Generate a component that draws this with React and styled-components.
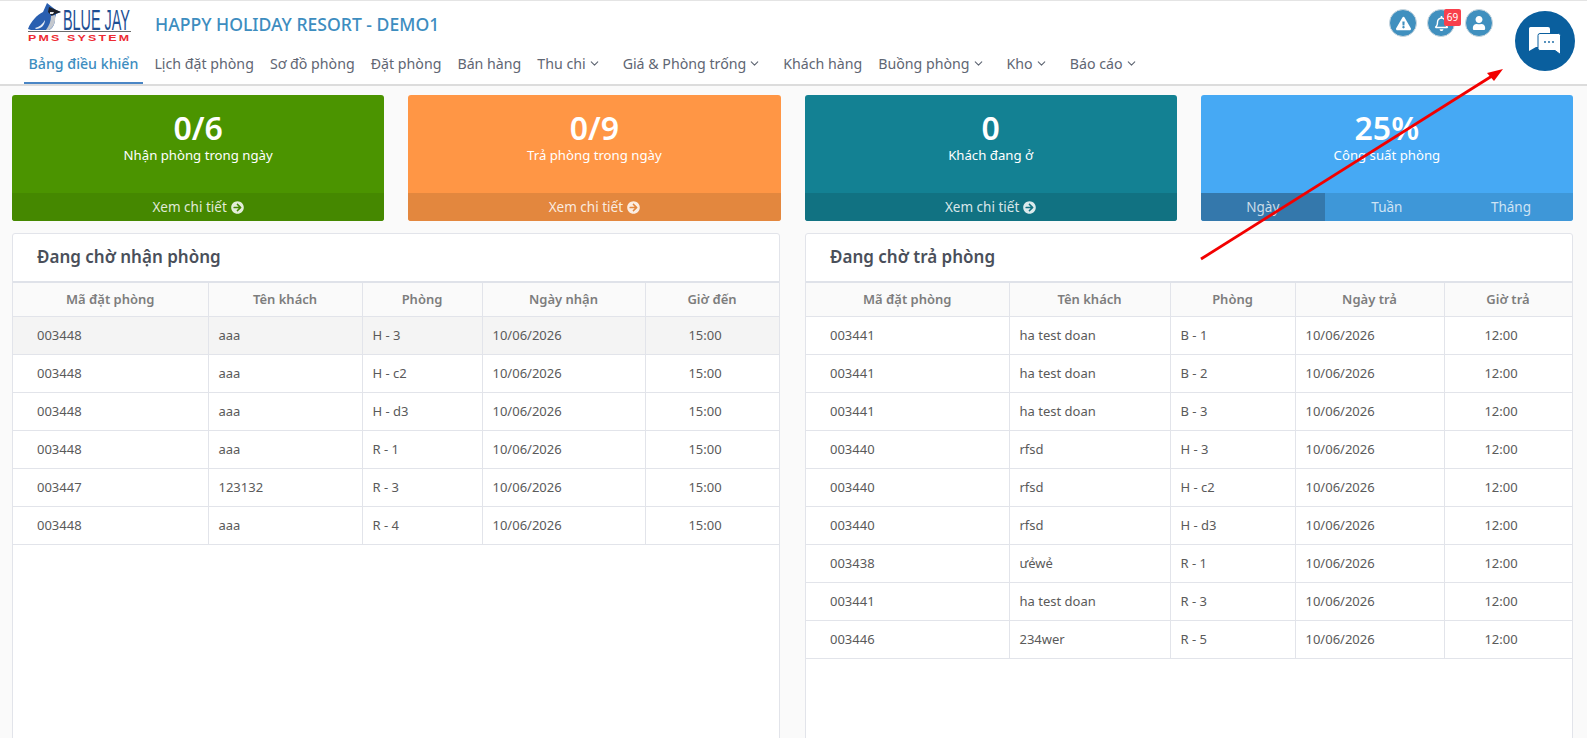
import React from 'react';
import styled, { createGlobalStyle } from 'styled-components';
import { FaExclamationTriangle, FaRegBell, FaUser, FaArrowCircleRight } from 'react-icons/fa';
import { FiChevronDown } from 'react-icons/fi';

const NAV = [
  { label: 'Bảng điều khiển', active: true },
  { label: 'Lịch đặt phòng' },
  { label: 'Sơ đồ phòng' },
  { label: 'Đặt phòng' },
  { label: 'Bán hàng' },
  { label: 'Thu chi', drop: true },
  { label: 'Giá & Phòng trống', drop: true },
  { label: 'Khách hàng' },
  { label: 'Buồng phòng', drop: true },
  { label: 'Kho', drop: true },
  { label: 'Báo cáo', drop: true },
];

const CHECK_IN = [
  ['003448', 'aaa', 'H - 3', '10/06/2026', '15:00'],
  ['003448', 'aaa', 'H - c2', '10/06/2026', '15:00'],
  ['003448', 'aaa', 'H - d3', '10/06/2026', '15:00'],
  ['003448', 'aaa', 'R - 1', '10/06/2026', '15:00'],
  ['003447', '123132', 'R - 3', '10/06/2026', '15:00'],
  ['003448', 'aaa', 'R - 4', '10/06/2026', '15:00'],
];

const CHECK_OUT = [
  ['003441', 'ha test doan', 'B - 1', '10/06/2026', '12:00'],
  ['003441', 'ha test doan', 'B - 2', '10/06/2026', '12:00'],
  ['003441', 'ha test doan', 'B - 3', '10/06/2026', '12:00'],
  ['003440', 'rfsd', 'H - 3', '10/06/2026', '12:00'],
  ['003440', 'rfsd', 'H - c2', '10/06/2026', '12:00'],
  ['003440', 'rfsd', 'H - d3', '10/06/2026', '12:00'],
  ['003438', 'ưẻwẻ', 'R - 1', '10/06/2026', '12:00'],
  ['003441', 'ha test doan', 'R - 3', '10/06/2026', '12:00'],
  ['003446', '234wer', 'R - 5', '10/06/2026', '12:00'],
];

function BirdLogo() {
  return (
    <LogoBird viewBox="0 0 33 28">
      <path d="M0 26 C3 18 9 12 15 9 L19 0 L24 4 L28 7 L33 9 L28 11 L27 15 C27 21 25 25 21 27 L3 27 Z" fill="#2a5fb0" />
      <path d="M7 25 C11 24 15 21 17 17 C17 22 13 26 8 26 Z" fill="#e6ecf5" />
      <path d="M21 4 L26 6 L33 9 L27 11 L24 13 L20 9 Z" fill="#1d2028" />
      <path d="M22 9 L26 9 L25 11 L22 11 Z" fill="#e8e8e8" />
      <path d="M23 13 L27 12 C28 18 26 24 21 27 L18 27 C21 23 23 18 23 13 Z" fill="#c4c8ce" />
    </LogoBird>
  );
}

function ChatIcon() {
  return (
    <svg width="32" height="28" viewBox="0 0 32 28">
      <path d="M1.5 0 H19 Q21 0 21 2 V18 Q21 20 19 20 H7 L0 24 V1.5 Q0 0 1.5 0 Z" fill="#fff" />
      <path d="M11 6.5 H29.5 Q31.5 6.5 31.5 8.5 V27.5 L26 23.5 H11 Q9 23.5 9 21.5 V8.5 Q9 6.5 11 6.5 Z" fill="#fff" stroke="#0a5f9e" />
      <circle cx="16" cy="15" r="0.9" fill="#0a5f9e" />
      <circle cx="20" cy="15" r="0.9" fill="#0a5f9e" />
      <circle cx="24" cy="15" r="0.9" fill="#0a5f9e" />
    </svg>
  );
}

function StatCard({ value, label, bg, foot, tabs }) {
  return (
    <Card $bg={bg}>
      <CardBody>
        <CardValue>{value}</CardValue>
        <CardLabel>{label}</CardLabel>
      </CardBody>
      {tabs ? (
        <CardTabs>
          {tabs.map((t, i) => (
            <CardTab key={t} $active={i === 0}>{t}</CardTab>
          ))}
        </CardTabs>
      ) : (
        <CardFoot $bg={foot}>
          Xem chi tiết <FaArrowCircleRight size={13} />
        </CardFoot>
      )}
    </Card>
  );
}

function BookingTable({ title, head, rows, widths, highlight }) {
  return (
    <Panel>
      <PanelTitle>{title}</PanelTitle>
      <Table>
        <colgroup>
          {widths.map((w, i) => (
            <col key={i} width={w} />
          ))}
        </colgroup>
        <thead>
          <tr>
            {head.map((h) => (
              <Th key={h}>{h}</Th>
            ))}
          </tr>
        </thead>
        <tbody>
          {rows.map((r, i) => (
            <Row key={i} $hl={highlight && i === 0}>
              {r.map((c, j) => (
                <Td key={j} $time={j === 4}>{c}</Td>
              ))}
            </Row>
          ))}
        </tbody>
      </Table>
    </Panel>
  );
}

export default function App() {
  return (
    <Page>
      <GlobalStyle />
      <Header>
        <TopRow>
          <Logo>
            <LogoMark>
              <BirdLogo />
              <LogoName>BLUE JAY</LogoName>
            </LogoMark>
            <LogoSub>PMS SYSTEM</LogoSub>
          </Logo>
          <HotelName>HAPPY HOLIDAY RESORT - DEMO1</HotelName>
          <TopIcons>
            <RoundIcon><FaExclamationTriangle size={15} /></RoundIcon>
            <RoundIcon>
              <FaRegBell size={15} />
              <Badge>69</Badge>
            </RoundIcon>
            <RoundIcon><FaUser size={14} /></RoundIcon>
          </TopIcons>
        </TopRow>
        <Nav>
          {NAV.map((n) => (
            <NavItem key={n.label} $active={n.active} $drop={n.drop}>
              {n.label}
              {n.drop && <FiChevronDown size={13} />}
            </NavItem>
          ))}
        </Nav>
      </Header>

      <Content>
        <Cards>
          <StatCard value="0/6" label="Nhận phòng trong ngày" bg="#4b9400" foot="#458800" />
          <StatCard value="0/9" label="Trả phòng trong ngày" bg="#ff9645" foot="#e3873e" />
          <StatCard value="0" label="Khách đang ở" bg="#138193" foot="#117282" />
          <StatCard value="25%" label="Công suất phòng" bg="#46a9f4" tabs={['Ngày', 'Tuần', 'Tháng']} />
        </Cards>
        <Panels>
          <BookingTable
            title="Đang chờ nhận phòng"
            head={['Mã đặt phòng', 'Tên khách', 'Phòng', 'Ngày nhận', 'Giờ đến']}
            rows={CHECK_IN}
            widths={[195, 154, 120, 163, 134]}
            highlight
          />
          <BookingTable
            title="Đang chờ trả phòng"
            head={['Mã đặt phòng', 'Tên khách', 'Phòng', 'Ngày trả', 'Giờ trả']}
            rows={CHECK_OUT}
            widths={[203, 161, 125, 149, 128]}
          />
        </Panels>
      </Content>

      <ChatButton><ChatIcon /></ChatButton>
      <ArrowOverlay viewBox="0 0 1587 738">
        <line x1="1201" y1="259" x2="1492" y2="76" stroke="#f20000" strokeWidth="2.8" />
        <polygon points="1503,69 1487,73 1494,81" fill="#f20000" />
      </ArrowOverlay>
    </Page>
  );
}

const GlobalStyle = createGlobalStyle`
  html, body {
    margin: 0;
    padding: 0;
    overflow: hidden;
    background: #fafafa;
    font-family: "Noto Sans", "Open Sans", sans-serif;
  }
  * { box-sizing: border-box; }
`;

const Page = styled.div`
  position: relative;
  height: 738px;
  overflow: hidden;
  color: #555;
`;

const Header = styled.header`
  height: 86px;
  background: #fff;
  border-top: 1px solid #e4e4e4;
  border-bottom: 2px solid #dcdcdc;
`;

const TopRow = styled.div`
  display: flex;
  align-items: flex-start;
  height: 44px;
  padding: 3px 94px 0 28px;
`;

const Logo = styled.div`
  width: 127px;
  display: flex;
  flex-direction: column;
`;

const LogoMark = styled.div`
  display: flex;
  align-items: flex-end;
  height: 28px;
  width: 103px;
  border-bottom: 1px solid #6a6a6a;
`;

const LogoBird = styled.svg`
  width: 33px;
  height: 28px;
  flex: none;
`;

const LogoName = styled.span`
  font-family: "Liberation Sans", sans-serif;
  font-size: 30px;
  line-height: 26px;
  color: #1d4f94;
  white-space: nowrap;
  margin-left: 2px;
  margin-bottom: -2px;
  transform: scaleX(0.48);
  transform-origin: left bottom;
`;

const LogoSub = styled.span`
  font-family: "Liberation Sans", sans-serif;
  font-size: 8.5px;
  line-height: 9px;
  margin-top: 2px;
  letter-spacing: 1.5px;
  font-weight: 700;
  color: #ee2b33;
  white-space: nowrap;
  transform: scaleX(1.46);
  transform-origin: left center;
`;

const HotelName = styled.div`
  font-size: 17.6px;
  line-height: 24px;
  margin-top: 8px;
  font-weight: 500;
  color: #3d8dbf;
  white-space: nowrap;
`;

const TopIcons = styled.div`
  margin-left: auto;
  display: flex;
  gap: 10px;
  margin-top: 5px;
`;

const RoundIcon = styled.span`
  position: relative;
  display: flex;
  align-items: center;
  justify-content: center;
  width: 28px;
  height: 28px;
  border-radius: 50%;
  background: #4090bf;
  border: 1px solid #c9d6de;
  color: #fff;
`;

const Badge = styled.span`
  position: absolute;
  top: -1px;
  right: -7px;
  width: 17px;
  height: 17px;
  background: #f8404c;
  border-radius: 2px;
  color: #fff;
  font-size: 10px;
  line-height: 17px;
  text-align: center;
`;

const Nav = styled.nav`
  display: flex;
  height: 39px;
  padding-left: 24px;
`;

const NavItem = styled.a`
  display: flex;
  align-items: center;
  gap: 2px;
  height: 39px;
  padding: 0 4.5px;
  margin-right: ${(p) => (p.$drop ? '13px' : '7px')};
  font-size: 14.2px;
  white-space: nowrap;
  color: ${(p) => (p.$active ? '#3d8dbf' : '#5f6673')};
  font-weight: ${(p) => (p.$active ? 500 : 400)};
  border-bottom: 2px solid ${(p) => (p.$active ? '#4a86c5' : 'transparent')};
`;

const Content = styled.main`
  padding: 9px 14px 0 12px;
`;

const Cards = styled.section`
  display: grid;
  grid-template-columns: repeat(4, minmax(0, 1fr));
  gap: 24px;
`;

const Card = styled.div`
  height: 126px;
  display: flex;
  flex-direction: column;
  border-radius: 3px;
  overflow: hidden;
  color: #fff;
  background: ${(p) => p.$bg};
`;

const CardBody = styled.div`
  flex: 1;
  text-align: center;
  padding-top: 15px;
`;

const CardValue = styled.div`
  font-size: 32px;
  line-height: 36px;
  font-weight: 600;
`;

const CardLabel = styled.div`
  font-size: 13.2px;
  line-height: 18px;
`;

const CardFoot = styled.div`
  height: 28px;
  display: flex;
  align-items: center;
  justify-content: center;
  gap: 4px;
  font-size: 13.5px;
  color: rgba(255, 255, 255, 0.85);
  background: ${(p) => p.$bg};
`;

const CardTabs = styled.div`
  height: 28px;
  display: grid;
  grid-template-columns: repeat(3, 1fr);
  background: #3e97d8;
`;

const CardTab = styled.div`
  display: flex;
  align-items: center;
  justify-content: center;
  font-size: 13.5px;
  color: rgba(255, 255, 255, 0.75);
  background: ${(p) => (p.$active ? '#3478ac' : 'transparent')};
`;

const Panels = styled.section`
  display: grid;
  grid-template-columns: repeat(2, minmax(0, 1fr));
  gap: 25px;
  margin-top: 12px;
`;

const Panel = styled.div`
  height: 600px;
  background: #fff;
  border: 1px solid #e2e4ea;
  border-radius: 3px;
`;

const PanelTitle = styled.h3`
  margin: 0;
  height: 49px;
  padding-left: 24px;
  font-size: 17px;
  line-height: 45px;
  font-weight: 600;
  color: #4a4f5a;
  border-bottom: 2px solid #dfe2e9;
`;

const Table = styled.table`
  width: 100%;
  table-layout: fixed;
  border-collapse: collapse;
`;

const Th = styled.th`
  height: 33px;
  font-size: 13px;
  font-weight: 600;
  color: #7d7d7d;
  background: #fafafa;
  border: 1px solid #e2e4ea;
  border-top: none;
  &:first-child { border-left: none; }
`;

const Row = styled.tr`
  background: ${(p) => (p.$hl ? '#f4f4f4' : '#fff')};
`;

const Td = styled.td`
  height: 38px;
  padding: ${(p) => (p.$time ? '0 24px 0 10px' : '0 10px')};
  font-size: 13px;
  color: #5a5a5a;
  text-align: ${(p) => (p.$time ? 'center' : 'left')};
  border: 1px solid #e2e4ea;
  &:first-child { border-left: none; padding-left: 24px; }
`;

const ChatButton = styled.div`
  position: absolute;
  top: 11px;
  left: 1515px;
  width: 60px;
  height: 60px;
  border-radius: 50%;
  background: #0a5f9e;
  display: flex;
  align-items: center;
  justify-content: center;
`;

const ArrowOverlay = styled.svg`
  position: absolute;
  top: 0;
  left: 0;
  width: 1587px;
  height: 738px;
  pointer-events: none;
`;
